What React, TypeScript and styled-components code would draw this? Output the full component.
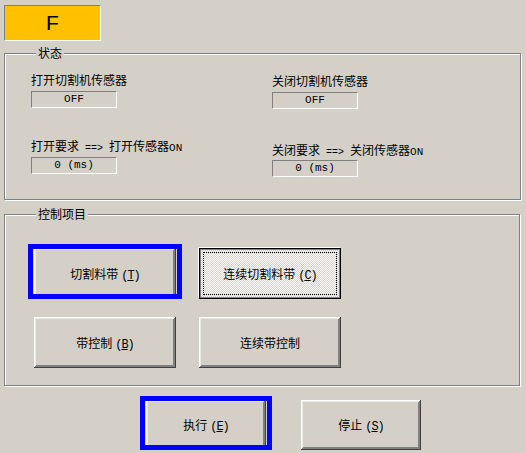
import React from "react"
import styled, { createGlobalStyle, css } from "styled-components"

const GlobalStyle = createGlobalStyle`
  html, body {
    margin: 0;
    padding: 0;
    background: #d4d0c8;
  }
  body {
    font-family: "Noto Sans CJK SC", "DejaVu Sans", sans-serif;
    font-size: 12px;
    color: #000;
  }
`

const Page = styled.div`
  width: 526px;
  height: 453px;
  box-sizing: border-box;
  padding: 5px 0 0 4px;
  overflow: hidden;
`

const ModeBox = styled.div`
  width: 97px;
  height: 36px;
  box-sizing: border-box;
  border: 1px solid;
  border-color: #808080 #ffffff #ffffff #808080;
  background: #ffc000;
  display: flex;
  align-items: center;
  justify-content: center;
  font-family: "Liberation Sans", Arial, sans-serif;
  font-size: 21px;
`

const Group = styled.fieldset<{ $width: number; $top: number; $pad: string }>`
  margin: ${p => p.$top}px 0 0 0;
  width: ${p => p.$width}px;
  min-width: 0;
  box-sizing: border-box;
  border: 1px solid #808080;
  box-shadow: inset 1px 1px #ffffff, 1px 1px #ffffff;
  padding: ${p => p.$pad};
`

const Legend = styled.legend<{ $indent: number }>`
  margin-left: ${p => p.$indent}px;
  padding: 0 2px;
  line-height: 14px;
  height: 14px;
  background: #d4d0c8;
`

const StatusGrid = styled.div`
  display: grid;
  grid-template-columns: 241px 1fr;
`

const Column = styled.div<{ $pad: number }>`
  display: flex;
  flex-direction: column;
  padding-top: ${p => p.$pad}px;
`

const Field = styled.div<{ $space: number }>`
  display: flex;
  flex-direction: column;
  align-items: flex-start;
  margin-top: ${p => p.$space}px;
`

const Label = styled.div<{ $gap: number }>`
  height: 14px;
  line-height: 14px;
  white-space: nowrap;
  margin-bottom: ${p => p.$gap}px;
`

const Mono = styled.span<{ $size: number }>`
  font-family: "Liberation Mono", "DejaVu Sans Mono", monospace;
  font-size: ${p => p.$size}px;
  white-space: pre;
`

const Readout = styled.div`
  width: 86px;
  height: 17px;
  box-sizing: border-box;
  border: 1px solid;
  border-color: #808080 #ffffff #ffffff #808080;
  font-family: "Liberation Mono", "DejaVu Sans Mono", monospace;
  font-size: 11px;
  line-height: 15px;
  text-align: center;
  white-space: pre;
`

const KeyHint = styled.span`
  margin-left: 3px;
  font-family: "Liberation Mono", "DejaVu Sans Mono", monospace;
  font-size: 12px;
  letter-spacing: -1px;
`

const ButtonGrid = styled.div`
  display: grid;
  grid-template-columns: repeat(2, 142px);
  column-gap: 23px;
  row-gap: 18px;
`

const ActionRow = styled.div`
  display: flex;
  gap: 35px;
  margin-top: 14px;
  padding-left: 142px;
`

const ring = css`
  &::after {
    content: "";
    position: absolute;
    top: -4px;
    left: -6px;
    right: -6px;
    bottom: 0px;
    border: 5px solid #0000ff;
    pointer-events: none;
  }
`

const checked = css`
  background: repeating-conic-gradient(#ffffff 0 25%, #d4d0c8 0 50%) 0 0 / 2px 2px;
  box-shadow: -1px -1px #ffffff, inset 1px 1px #000000, inset -1px -1px #000000,
    inset 2px 2px #808080, inset -2px -2px #808080;
  &::before {
    content: "";
    position: absolute;
    inset: 4px;
    border: 1px dotted #000000;
    pointer-events: none;
  }
`

const Button = styled.button<{ $w: number; $h: number; $checked?: boolean; $ring?: boolean }>`
  position: relative;
  width: ${p => p.$w}px;
  height: ${p => p.$h}px;
  padding: 0;
  border: none;
  background: #d4d0c8;
  box-shadow: inset -1px -1px #404040, inset 1px 1px #ffffff,
    inset -2px -2px #808080, inset 2px 2px #ece9e4, inset -3px -3px #808080;
  font-family: "Noto Sans CJK SC", "DejaVu Sans", sans-serif;
  font-size: 12px;
  color: #000;
  white-space: nowrap;
  ${p => p.$checked && checked}
  ${p => p.$ring && ring}
`

function Key({ k }: { k: string }) {
  return (
    <KeyHint>
      (<u>{k}</u>)
    </KeyHint>
  )
}

export default function App() {
  return (
    <Page>
      <GlobalStyle />
      <ModeBox>F</ModeBox>

      <Group $width={517} $top={5} $pad="13px 0 22px 26px">
        <Legend $indent={5}>状态</Legend>
        <StatusGrid>
          <Column $pad={0}>
            <Field $space={0}>
              <Label $gap={4}>打开切割机传感器</Label>
              <Readout>OFF</Readout>
            </Field>
            <Field $space={31}>
              <Label $gap={4}>
                打开要求<Mono $size={10}> ==&gt; </Mono>打开传感器<Mono $size={11}>ON</Mono>
              </Label>
              <Readout>0 (ms)</Readout>
            </Field>
          </Column>
          <Column $pad={1}>
            <Field $space={0}>
              <Label $gap={4}>关闭切割机传感器</Label>
              <Readout>OFF</Readout>
            </Field>
            <Field $space={34}>
              <Label $gap={3}>
                关闭要求<Mono $size={10}> ==&gt; </Mono>关闭传感器<Mono $size={11}>ON</Mono>
              </Label>
              <Readout>0 (ms)</Readout>
            </Field>
          </Column>
        </StatusGrid>
      </Group>

      <Group $width={516} $top={7} $pad="27px 0 17px 29px">
        <Legend $indent={2}>控制项目</Legend>
        <ButtonGrid>
          <Button $w={142} $h={51} $ring>
            切割料带<Key k="T" />
          </Button>
          <Button $w={142} $h={51} $checked>
            连续切割料带<Key k="C" />
          </Button>
          <Button $w={142} $h={51}>
            带控制<Key k="B" />
          </Button>
          <Button $w={142} $h={51}>
            连续带控制
          </Button>
        </ButtonGrid>
      </Group>

      <ActionRow>
        <Button $w={120} $h={50} $ring>
          执行<Key k="E" />
        </Button>
        <Button $w={120} $h={50}>
          停止<Key k="S" />
        </Button>
      </ActionRow>
    </Page>
  )
}
